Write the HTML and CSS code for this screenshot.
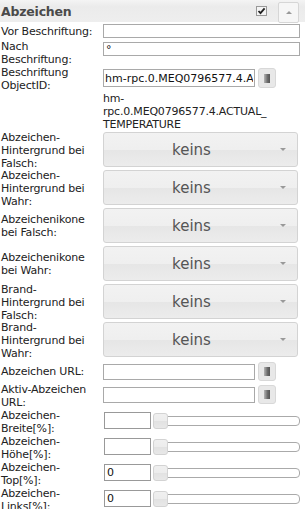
FILE: index.html
```html
<!DOCTYPE html>
<html lang="de">
<head>
<meta charset="UTF-8">
<meta name="viewport" content="width=device-width, initial-scale=1.0">
<title>Abzeichen</title>
<link rel="stylesheet" href="styles.css">
</head>
<body>
<div class="panel">
    <div class="panel-head">
        <span class="panel-title">Abzeichen</span>
        <span class="head-check">
            <svg width="11" height="10" viewBox="0 0 11 10"><rect x="0.5" y="0.5" width="10" height="9" fill="#f4f4f4" stroke="#999"/><path d="M2.5 5 L4.5 7.2 L8.6 2.4" fill="none" stroke="#222" stroke-width="1.8"/></svg>
        </span>
        <span class="head-btn"><span class="tri-up"></span></span>
    </div>

    <div class="attrs">
        <div class="lbl">Vor Beschriftung:</div>
        <div class="val"><input class="txt full" type="text" value=""></div>

        <div class="lbl">Nach Beschriftung:</div>
        <div class="val"><input class="txt full" type="text" value="°"></div>

        <div class="lbl">Beschriftung ObjectID:</div>
        <div class="val val-id">
            <input class="txt oid" type="text" value="hm-rpc.0.MEQ0796577.4.ACTUAL_TEMPERATURE">
            <span class="pick"><span class="pick-ico"></span></span>
        </div>

        <div class="lbl"></div>
        <div class="val id-text">hm-rpc.0.MEQ0796577.4.ACTUAL_<wbr>TEMPERATURE</div>

        <div class="lbl tall">Abzeichen-Hintergrund bei Falsch:</div>
        <div class="val val-sel"><div class="select"><span>keins</span><i class="tri-down"></i></div></div>

        <div class="lbl tall">Abzeichen-Hintergrund bei Wahr:</div>
        <div class="val val-sel"><div class="select"><span>keins</span><i class="tri-down"></i></div></div>

        <div class="lbl">Abzeichenikone bei Falsch:</div>
        <div class="val val-sel"><div class="select"><span>keins</span><i class="tri-down"></i></div></div>

        <div class="lbl">Abzeichenikone bei Wahr:</div>
        <div class="val val-sel"><div class="select"><span>keins</span><i class="tri-down"></i></div></div>

        <div class="lbl tall">Brand-Hintergrund bei Falsch:</div>
        <div class="val val-sel"><div class="select"><span>keins</span><i class="tri-down"></i></div></div>

        <div class="lbl tall">Brand-Hintergrund bei Wahr:</div>
        <div class="val val-sel"><div class="select"><span>keins</span><i class="tri-down"></i></div></div>

        <div class="lbl">Abzeichen URL:</div>
        <div class="val val-url">
            <input class="txt url" type="text" value="">
            <span class="pick"><span class="pick-ico"></span></span>
        </div>

        <div class="lbl">Aktiv-Abzeichen URL:</div>
        <div class="val val-url2">
            <input class="txt url" type="text" value="">
            <span class="pick"><span class="pick-ico"></span></span>
        </div>

        <div class="lbl">Abzeichen-Breite[%]:</div>
        <div class="val val-num">
            <input class="txt num" type="text" value="">
            <div class="slider"><span class="handle"></span></div>
        </div>

        <div class="lbl">Abzeichen-Höhe[%]:</div>
        <div class="val val-num">
            <input class="txt num" type="text" value="">
            <div class="slider"><span class="handle"></span></div>
        </div>

        <div class="lbl">Abzeichen-Top[%]:</div>
        <div class="val val-num">
            <input class="txt num" type="text" value="0">
            <div class="slider"><span class="handle"></span></div>
        </div>

        <div class="lbl">Abzeichen-Links[%]:</div>
        <div class="val val-num">
            <input class="txt num" type="text" value="0">
            <div class="slider"><span class="handle"></span></div>
        </div>
    </div>
</div>
</body>
</html>
```

FILE: styles.css
```css
body {
    margin: 0;
    padding: 0;
    background: #fff;
    font-family: "DejaVu Sans", Verdana, sans-serif;
    font-size: 11px;
    color: #222;
    overflow: hidden;
}

.panel {
    width: 305px;
}

.panel-head {
    height: 22px;
    display: flex;
    align-items: center;
    background: linear-gradient(to bottom, #f4f4f4, #ebebeb 30%, #eeeeee);
    position: relative;
}

.panel-title {
    flex: 1;
    padding-left: 1px;
    font-weight: bold;
    font-size: 12.5px;
    color: #4a4a4a;
    letter-spacing: -0.2px;
}

.head-check {
    width: 11px;
    height: 10px;
    margin-right: 11px;
    margin-top: -1px;
    display: flex;
}

.head-btn {
    width: 19px;
    height: 19px;
    margin-right: 6px;
    margin-top: 2px;
    border: 1px solid #d6d6d6;
    border-radius: 2px;
    background: #f6f6f6;
    display: flex;
    align-items: center;
    justify-content: center;
}

.tri-up {
    width: 0;
    height: 0;
    border-left: 3px solid transparent;
    border-right: 3px solid transparent;
    border-bottom: 3px solid #999;
}

.attrs {
    display: grid;
    grid-template-columns: 103px 1fr;
}

.lbl {
    align-self: center;
    padding: 0 8px 0 1px;
    line-height: 13px;
    letter-spacing: -0.2px;
    color: #222;
}

.lbl.tall {
    margin: -1px 0;
}

.val {
    align-self: start;
    padding: 2px 0;
}

.txt {
    box-sizing: border-box;
    display: block;
    margin: 0;
    border: 1px solid #a9a9a9;
    background: #fff;
    font-family: "DejaVu Sans", Verdana, sans-serif;
    font-size: 11px;
    color: #111;
    padding: 0 2px;
    outline: none;
}

.full {
    width: 197px;
    height: 14px;
}

.val-id,
.val-url,
.val-url2 {
    display: flex;
    align-items: center;
}

.oid {
    width: 152px;
    height: 18px;
    padding: 0 1px;
}

.pick {
    box-sizing: border-box;
    width: 18px;
    height: 20px;
    margin-left: 3px;
    border: 1px solid #d8d8d8;
    border-radius: 3px;
    background: #e8e8e8;
    display: flex;
    align-items: center;
    justify-content: center;
}

.pick-ico {
    width: 6px;
    height: 9px;
    background: linear-gradient(to right, #b5b5b5, #6a6a6a 60%, #555);
}

.id-text {
    padding: 0;
    line-height: 13px;
    letter-spacing: -0.2px;
    width: 172px;
    overflow-wrap: break-word;
}

.val-sel {
    padding: 1px 0 2px;
}

.select {
    box-sizing: border-box;
    width: 195px;
    height: 35px;
    border: 1px solid #d3d3d3;
    border-radius: 3px;
    background: linear-gradient(to bottom, #f2f2f2 0%, #efefef 50%, #e6e6e6 52%, #ececec 100%);
    display: flex;
    align-items: center;
    position: relative;
}

.select span {
    flex: 1;
    text-align: center;
    padding-right: 18px;
    font-size: 15px;
    color: #555;
}

.tri-down {
    position: absolute;
    right: 11px;
    top: 15px;
    width: 0;
    height: 0;
    border-left: 3px solid transparent;
    border-right: 3px solid transparent;
    border-top: 3px solid #999;
}

.val-url {
    padding: 3px 0 2px;
}

.val-url2 {
    padding: 2px 0 0;
}

.url {
    width: 152px;
    height: 16px;
}

.url + .pick {
    height: 19px;
}

.val-num {
    display: flex;
    align-items: center;
    padding: 3px 0 2px;
}

.num {
    width: 47px;
    height: 17px;
    margin-left: 1px;
    border-color: #999;
    padding: 0 2px;
}

.slider {
    position: relative;
    box-sizing: border-box;
    width: 147px;
    height: 10px;
    margin-left: 2px;
    border: 1px solid #aaa;
    border-radius: 0 4px 4px 0;
    background: #fff;
}

.handle {
    position: absolute;
    left: -1px;
    top: -4px;
    box-sizing: border-box;
    width: 15px;
    height: 16px;
    border: 1px solid #d3d3d3;
    border-radius: 3px;
    background: linear-gradient(to bottom, #f0f0f0 0%, #ececec 50%, #e2e2e2 52%, #e8e8e8 100%);
}
```
